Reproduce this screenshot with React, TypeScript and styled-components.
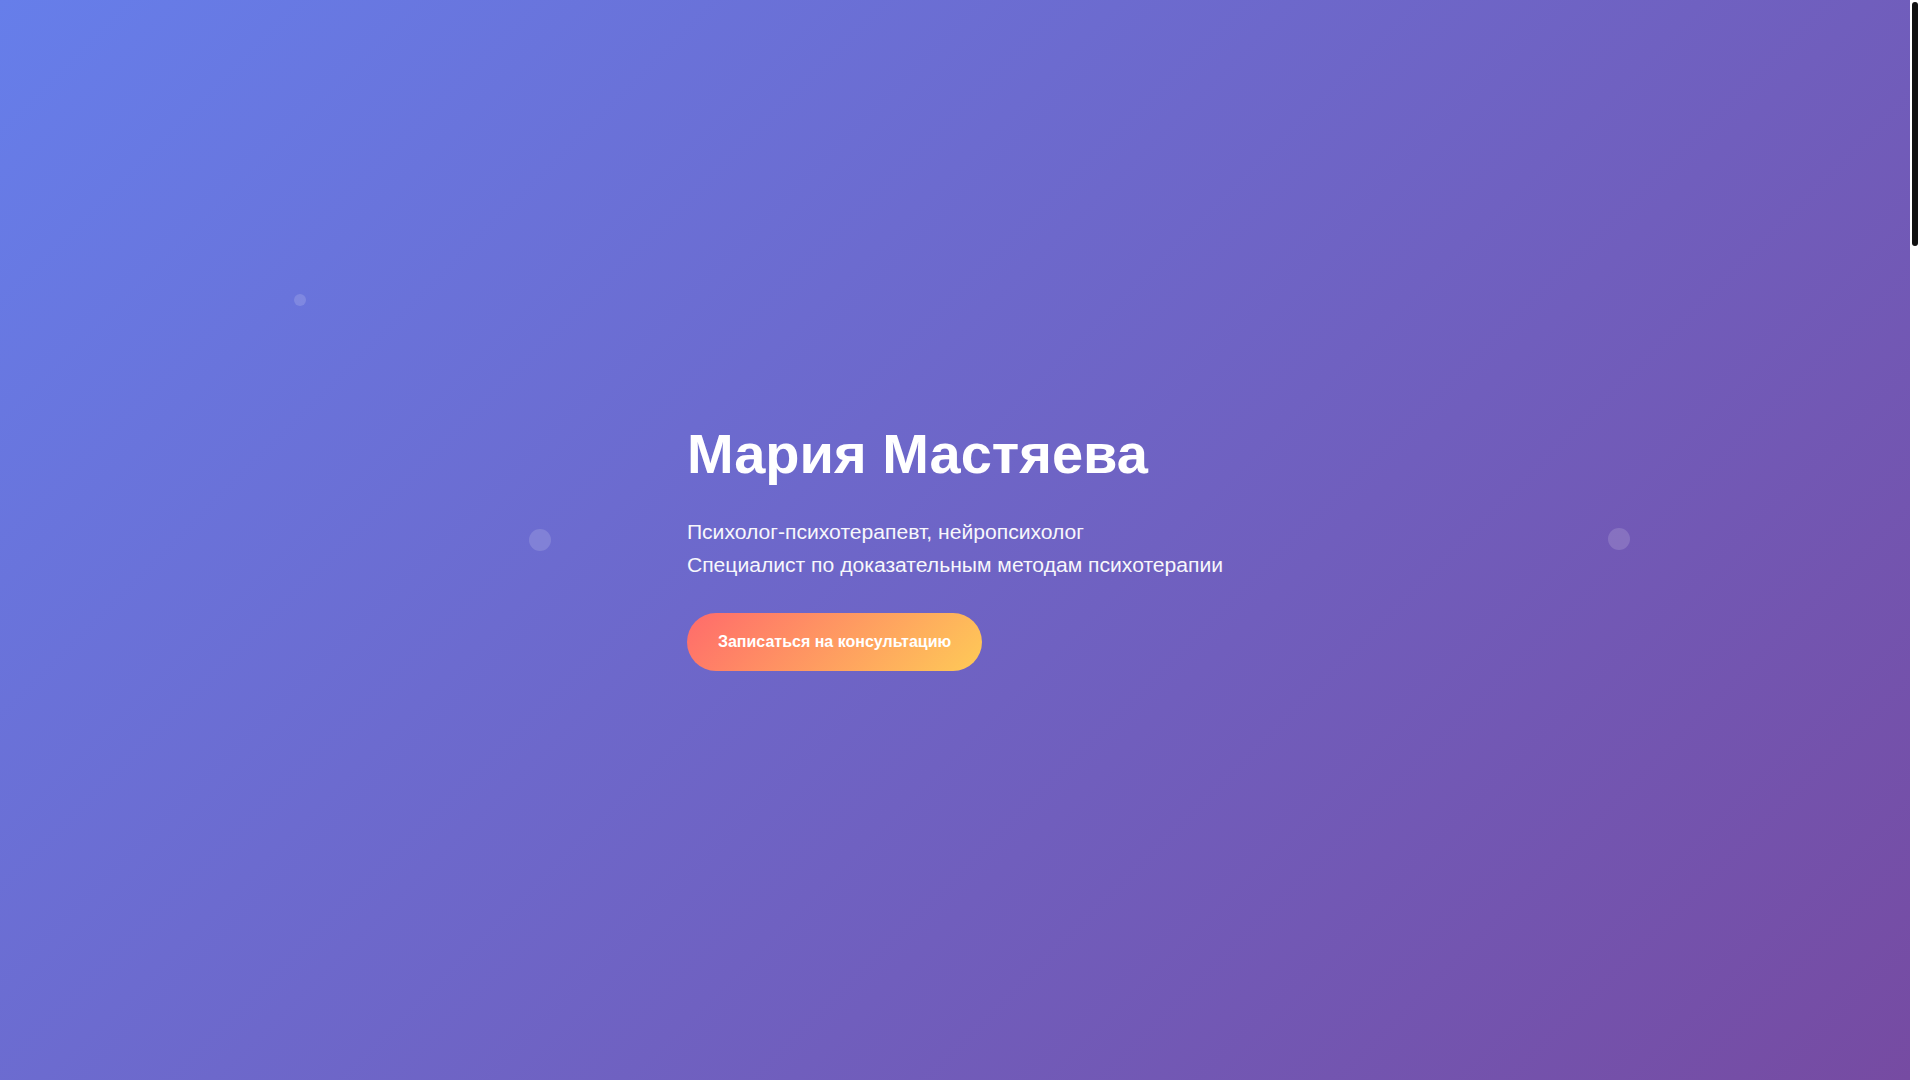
import styled, { createGlobalStyle } from 'styled-components'

type Particle = {
  id: string
  x: number
  y: number
  size: number
}

const particles: Particle[] = [
  { id: 'p1', x: 294, y: 294, size: 12 },
  { id: 'p2', x: 529, y: 529, size: 22 },
  { id: 'p3', x: 1608, y: 528, size: 22 },
]

const GlobalStyle = createGlobalStyle`
  * {
    box-sizing: border-box;
  }

  html, body {
    margin: 0;
    padding: 0;
    overflow: hidden;
  }

  body {
    font-family: 'Liberation Sans', Arial, sans-serif;
    color: #333;
    background: #fff;
  }
`

const Page = styled.div`
  display: grid;
  grid-template-columns: 1fr 10px;
  height: 100vh;
`

const Main = styled.main`
  height: 100vh;
  overflow: hidden;
`

// slim scrollbar as drawn by the page's custom theme
const ScrollRail = styled.div`
  background: #fff;
  padding: 2px;
`

const ScrollThumb = styled.div`
  height: 244px;
  background: #111;
  border-radius: 3px;
`

const Hero = styled.section`
  position: relative;
  height: 100vh;
  display: flex;
  align-items: center;
  justify-content: center;
  background: linear-gradient(135deg, #667eea 0%, #764ba2 100%);
  overflow: hidden;
`

const Dot = styled.span<{ $x: number; $y: number; $size: number }>`
  position: absolute;
  left: ${(p) => p.$x}px;
  top: ${(p) => p.$y}px;
  width: ${(p) => p.$size}px;
  height: ${(p) => p.$size}px;
  border-radius: 50%;
  background: rgba(255, 255, 255, 0.15);
`

const HeroContent = styled.div`
  position: relative;
  z-index: 1;
  color: #fff;
  margin-top: 11px;
`

const Title = styled.h1`
  margin: 0 0 27.4px;
  font-size: 3.5rem;
  line-height: 1.2;
  font-weight: 700;
`

const Subtitle = styled.p`
  margin: 0 0 31.4px;
  font-size: 1.32rem;
  line-height: 1.58;
  opacity: 0.95;
`

const CtaButton = styled.button`
  border: none;
  border-radius: 50px;
  padding: 1.2rem 31px;
  font-family: 'Liberation Sans', Arial, sans-serif;
  font-size: 1rem;
  line-height: 1.2;
  font-weight: 700;
  color: #fff;
  background: linear-gradient(135deg, #ff6b6b 0%, #feca57 100%);
  cursor: pointer;
`

export default function App() {
  return (
    <Page>
      <GlobalStyle />
      <Main>
        <Hero>
          {particles.map((p) => (
            <Dot key={p.id} $x={p.x} $y={p.y} $size={p.size} />
          ))}
          <HeroContent>
            <Title>Мария Мастяева</Title>
            <Subtitle>
              Психолог-психотерапевт, нейропсихолог
              <br />
              Специалист по доказательным методам психотерапии
            </Subtitle>
            <CtaButton>Записаться на консультацию</CtaButton>
          </HeroContent>
        </Hero>
      </Main>
      <ScrollRail>
        <ScrollThumb />
      </ScrollRail>
    </Page>
  )
}
